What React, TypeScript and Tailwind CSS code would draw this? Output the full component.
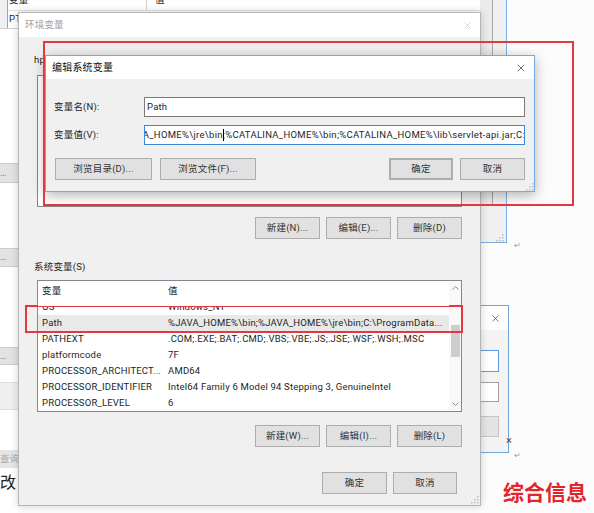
import React from "react";
import { X } from "lucide-react";

const sysRows = [
  { name: "OS", value: "Windows_NT" },
  { name: "Path", value: "%JAVA_HOME%\\bin;%JAVA_HOME%\\jre\\bin;C:\\ProgramData...", selected: true },
  { name: "PATHEXT", value: ".COM;.EXE;.BAT;.CMD;.VBS;.VBE;.JS;.JSE;.WSF;.WSH;.MSC" },
  { name: "platformcode", value: "7F" },
  { name: "PROCESSOR_ARCHITECT...", value: "AMD64" },
  { name: "PROCESSOR_IDENTIFIER", value: "Intel64 Family 6 Model 94 Stepping 3, GenuineIntel" },
  { name: "PROCESSOR_LEVEL", value: "6" },
];

function WinButton({ label, className = "" }: { label: string; className?: string }) {
  return (
    <div
      className={`h-[22px] shrink-0 flex items-center justify-center bg-[#e1e1e1] border border-[#adadad] text-[#333] ${className}`}
    >
      {label}
    </div>
  );
}

function Grip({ className = "" }: { className?: string }) {
  return (
    <svg width="9" height="9" viewBox="0 0 9 9" className={className} fill="#bdbdbd">
      <rect x="7" y="1" width="1.5" height="1.5" />
      <rect x="4" y="4" width="1.5" height="1.5" />
      <rect x="7" y="4" width="1.5" height="1.5" />
      <rect x="1" y="7" width="1.5" height="1.5" />
      <rect x="4" y="7" width="1.5" height="1.5" />
      <rect x="7" y="7" width="1.5" height="1.5" />
    </svg>
  );
}

function SystemList() {
  return (
    <div className="ml-[3px] mt-[7px] h-[132px] bg-white border border-[#828790] flex overflow-hidden">
      <div className="flex-1 flex flex-col overflow-hidden">
        {/* header sits over the half scrolled first row */}
        <div className="h-[25px] shrink-0 relative z-10 bg-white flex items-start pt-[4px] pl-[4px] leading-[12px]">
          <span className="w-[126px]">变量</span>
          <span>值</span>
        </div>
        <div className="-mt-[7px] flex flex-col">
          {sysRows.map((row) => (
            <div
              key={row.name}
              className={`h-[16px] shrink-0 flex items-center pl-[4px] whitespace-nowrap ${
                row.selected ? "bg-[#e9e9e9]" : ""
              }`}
            >
              <span className="w-[126px] shrink-0">{row.name}</span>
              <span>{row.value}</span>
            </div>
          ))}
        </div>
      </div>
      <div className="w-[12px] shrink-0 flex flex-col items-center bg-[#f9f9f9]">
        <svg className="mt-[5px]" width="7" height="4" viewBox="0 0 7 4">
          <polyline points="0.5,3.5 3.5,0.5 6.5,3.5" fill="none" stroke="#8a8a8a" />
        </svg>
        <div className="mt-[35px] w-[9px] h-[32px] bg-[#cdcdcd]" />
        <div className="flex-1" />
        <svg className="mb-[5px]" width="7" height="4" viewBox="0 0 7 4">
          <polyline points="0.5,0.5 3.5,3.5 6.5,0.5" fill="none" stroke="#8a8a8a" />
        </svg>
      </div>
    </div>
  );
}

export default function App() {
  return (
    <div className="relative w-[594px] h-[513px] overflow-hidden bg-[#fcfcfc] text-[9.5px] tracking-[0.2px] text-[#1e1e1e] font-['Roboto','Noto_Sans_CJK_SC',sans-serif]">
      {/* back window: top list */}
      <div className="absolute left-0 top-[-18px] w-[507px] h-[261px] flex flex-col bg-[#f0f0f0] border-r border-b border-[#79aee3] pl-[7px] pr-[13px]">
        <div className="h-[223px] shrink-0 bg-white border-l border-r border-b border-[#a5a5a5] flex">
          <div className="flex-1 flex flex-col">
            <div className="h-[29px] shrink-0 flex items-end border-b border-[#e3e3e3]">
              <span className="w-[139px] h-[16px] pl-[1px] border-r border-[#cfcfcf] leading-[12px]">变量</span>
              <span className="pl-[8px] h-[16px] leading-[12px]">值</span>
            </div>
            <div className="h-[16px] flex items-center pl-[1px]">PT</div>
          </div>
          <div className="w-[12px] shrink-0 bg-[#ebebeb]" />
        </div>
        <div className="flex-1 flex items-end justify-end">
          <Grip className="-mr-[11px]" />
        </div>
      </div>

      {/* back window: left strip */}
      <div className="absolute left-0 top-[28px] w-[18px] h-[485px] flex flex-col bg-white border-t border-[#cfcfcf] overflow-hidden">
        <div className="mt-[134px] h-[20px] shrink-0 bg-[#e3e3e3] border-y border-[#cccccc] flex items-center text-[#666]">…</div>
        <div className="mt-[65px] h-[19px] shrink-0 bg-[#e3e3e3] border-y border-[#cccccc] flex items-center text-[#666]">…</div>
        <div className="mt-[80px] h-[18px] shrink-0 bg-[#e3e3e3] border-y border-[#cccccc] flex items-center text-[#666]">…</div>
        <div className="mt-[17px] h-[28px] shrink-0 bg-[#efefef] border-y border-[#dddddd]" />
        <div className="mt-[40px] h-[18px] shrink-0 bg-[#e6e6e6] flex items-center text-[#aaa] whitespace-nowrap">查询</div>
        <div className="mt-[6px] h-[18px] shrink-0 text-[16px] leading-[18px] text-[#222] whitespace-nowrap">改</div>
      </div>

      {/* back window: small right dialog */}
      <div className="absolute left-[380px] top-[305px] w-[129px] h-[148px] flex flex-col bg-[#f4f4f4] border border-[#6fa6dc]">
        <div className="h-[24px] shrink-0 bg-white flex items-center justify-end pr-[7px]">
          <X size={11} strokeWidth={1.4} className="text-[#333]" />
        </div>
        <div className="flex flex-col items-end pr-[9px] pt-[20px]">
          <div className="w-[100px] h-[22px] bg-white border border-[#5a9ae0]" />
          <div className="mt-[10px] w-[100px] h-[20px] bg-white border border-[#a0a0a0]" />
          <div className="mt-[14px] w-[70px] h-[21px] bg-[#e4e4e4] border border-[#c4c4c4]" />
        </div>
      </div>
      <span className="absolute left-[506px] top-[433px] text-[11px] text-[#444]">×</span>
      <span className="absolute left-[514px] top-[450px] text-[8px] text-[#999]">↵</span>
      <span className="absolute left-[514px] top-[240px] text-[8px] text-[#999]">↵</span>

      {/* 环境变量 */}
      <div className="absolute left-[18px] top-[12px] w-[463px] h-[494px] flex flex-col bg-[#f0f0f0] border border-[#b5b5b5] shadow-[0_0_8px_rgba(0,0,0,0.18)]">
        <div className="h-[24px] shrink-0 bg-white flex items-center justify-between pl-[6px] pr-[7px]">
          <span className="text-[#a0a0a0]">环境变量</span>
          <X size={11} strokeWidth={1} className="text-[#a8a8a8]" />
        </div>
        <div className="flex flex-col pl-[15px] pr-[18px]">
          <div className="mt-[17px] h-[12px] leading-[12px] whitespace-nowrap">hpx 的用户变量(U)</div>
          <div className="ml-[3px] mt-[9px] h-[132px] bg-white border border-[#828790]" />
          <div className="mt-[10px] flex justify-end gap-[6px]">
            <WinButton label="新建(N)..." className="w-[65px]" />
            <WinButton label="编辑(E)..." className="w-[65px]" />
            <WinButton label="删除(D)" className="w-[65px]" />
          </div>
          <div className="mt-[22px] h-[12px] leading-[12px]">系统变量(S)</div>
          <SystemList />
          <div className="mt-[13px] flex justify-end gap-[6px]">
            <WinButton label="新建(W)..." className="w-[65px]" />
            <WinButton label="编辑(I)..." className="w-[65px]" />
            <WinButton label="删除(L)" className="w-[65px]" />
          </div>
          <div className="mt-[25px] flex justify-end gap-[6px] pr-[5px]">
            <WinButton label="确定" className="w-[65px]" />
            <WinButton label="取消" className="w-[64px]" />
          </div>
        </div>
        <div className="flex-1 flex items-end justify-end pr-[1px] pb-[1px]">
          <Grip />
        </div>
      </div>

      {/* 编辑系统变量 */}
      <div className="absolute left-[45px] top-[55px] w-[490px] h-[137px] flex flex-col bg-[#f0f0f0] border border-[#74aae0] shadow-[0_3px_12px_rgba(0,0,0,0.3)]">
        <div className="h-[23px] shrink-0 bg-white flex items-center justify-between pl-[6px] pr-[7px]">
          <span className="text-[10px] text-[#111]">编辑系统变量</span>
          <X size={12} strokeWidth={1.3} className="text-[#222]" />
        </div>
        <div className="flex flex-col pl-[8px] pr-[9px] pt-[18px]">
          <div className="h-[20px] flex items-center">
            <span className="w-[90px] shrink-0">变量名(N):</span>
            <div className="flex-1 h-full bg-white border border-[#7a7a7a] flex items-center px-[2px]">Path</div>
          </div>
          <div className="mt-[8px] h-[20px] flex items-center">
            <span className="w-[90px] shrink-0">变量值(V):</span>
            <div className="flex-1 min-w-0 h-full bg-white border border-[#3a88d6] flex items-center justify-end overflow-hidden whitespace-nowrap tracking-[0.3px]">
              <span className="shrink-0">%JAVA_HOME%\jre\bin</span>
              <span className="shrink-0 w-[1px] h-[12px] bg-black -mr-[1px]" />
              <span className="shrink-0 -mr-[1px]">;%CATALINA_HOME%\bin;%CATALINA_HOME%\lib\servlet-api.jar;C:</span>
            </div>
          </div>
          <div className="mt-[13px] flex items-center">
            <WinButton label="浏览目录(D)..." className="w-[97px] ml-[1px]" />
            <WinButton label="浏览文件(F)..." className="w-[96px] ml-[8px]" />
            <div className="flex-1" />
            <WinButton label="确定" className="w-[64px] border-2 border-[#3a8ad8]" />
            <WinButton label="取消" className="w-[65px] ml-[7px]" />
          </div>
        </div>
        <div className="flex-1 flex items-end justify-end">
          <Grip />
        </div>
      </div>

      {/* red annotations */}
      <div className="absolute left-[43px] top-[41px] w-[531px] h-[165px] border-2 border-[#e8363f]" />
      <div className="absolute left-[25px] top-[305px] w-[438px] h-[28px] border-2 border-[#e8363f]" />

      <div className="absolute left-[503px] top-[481px] text-[21px] leading-[24px] font-bold tracking-normal text-[#e3252b] whitespace-nowrap">
        综合信息
      </div>
    </div>
  );
}
